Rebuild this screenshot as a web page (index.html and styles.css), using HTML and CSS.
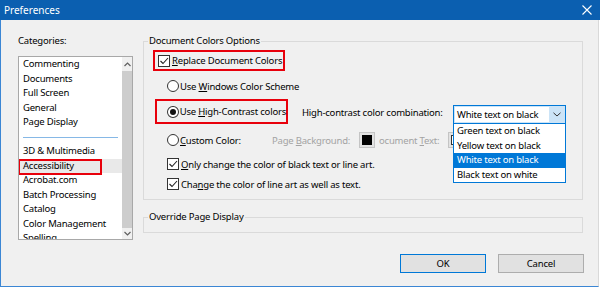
FILE: index.html
```html
<!DOCTYPE html>
<html lang="en">
  <head>
    <meta charset="UTF-8" />
    <title>Preferences</title>
    <link rel="stylesheet" href="styles.css">
  </head>
  <body>
    <div class="titlebar">
      <span class="title">Preferences</span>
      <svg class="close" width="10" height="10" viewBox="0 0 10 10">
        <path d="M0.5 0.5 L9.5 9.5 M9.5 0.5 L0.5 9.5" stroke="#fff" stroke-width="1.1" fill="none" />
      </svg>
    </div>

    <div class="window">
      <div class="main">
        <div class="categories">
          <div class="cat-label">Categories:</div>
          <div class="listbox">
            <ul class="items">
              <li>Commenting</li>
              <li>Documents</li>
              <li>Full Screen</li>
              <li>General</li>
              <li>Page Display</li>
              <li class="separator"></li>
              <li>3D &amp; Multimedia</li>
              <li class="selected">Accessibility<span class="item-mark"></span></li>
              <li>Acrobat.com</li>
              <li>Batch Processing</li>
              <li>Catalog</li>
              <li>Color Management</li>
              <li>Spelling</li>
            </ul>
            <div class="scrollbar">
              <div class="scroll-btn up">
                <svg width="7" height="5" viewBox="0 0 7 5"><path d="M0.5 4 L3.5 1 L6.5 4" stroke="#606060" stroke-width="1.2" fill="none" /></svg>
              </div>
              <div class="thumb"></div>
              <div class="scroll-btn down">
                <svg width="7" height="5" viewBox="0 0 7 5"><path d="M0.5 1 L3.5 4 L6.5 1" stroke="#606060" stroke-width="1.2" fill="none" /></svg>
              </div>
            </div>
          </div>
        </div>

        <div class="options">
          <fieldset class="group colors">
            <legend>Document Colors Options</legend>
            <div class="group-body">
              <label class="option mark row-replace">
                <span class="check"><svg width="10" height="10" viewBox="0 0 10 10"><path d="M1.5 5 L4 7.5 L9 2" stroke="#222" stroke-width="1.1" fill="none" /></svg></span>
                <span><u>R</u>eplace Document Colors</span>
              </label>

              <label class="option row-windows">
                <span class="radio"></span>
                <span>Use <u>W</u>indows Color Scheme</span>
              </label>

              <div class="row-hc">
                <label class="option mark hc-mark">
                  <span class="radio on"></span>
                  <span>Use <u>H</u>igh-Contrast colors</span>
                </label>
                <span class="hc-label">High-contrast color combination:</span>
                <div class="combo">
                  <span class="combo-text">White text on black</span>
                  <span class="combo-arrow">
                    <svg width="8" height="5" viewBox="0 0 8 5"><path d="M0.5 0.8 L4 4 L7.5 0.8" stroke="#333" stroke-width="1" fill="none" /></svg>
                  </span>
                  <ul class="combo-list">
                    <li>Green text on black</li>
                    <li>Yellow text on black</li>
                    <li class="active">White text on black</li>
                    <li>Black text on white</li>
                  </ul>
                </div>
              </div>

              <div class="option row-custom">
                <span class="radio"></span>
                <span class="custom-label"><u>C</u>ustom Color:</span>
                <span class="muted bg-label">Page <u>B</u>ackground:</span>
                <span class="swatch"><i></i></span>
                <span class="muted text-label">ocument <u>T</u>ext:</span>
                <span class="swatch light"><i></i></span>
              </div>

              <label class="option row-only">
                <span class="check"><svg width="10" height="10" viewBox="0 0 10 10"><path d="M1.5 5 L4 7.5 L9 2" stroke="#222" stroke-width="1.1" fill="none" /></svg></span>
                <span><u>O</u>nly change the color of black text or line art.</span>
              </label>

              <label class="option row-change">
                <span class="check"><svg width="10" height="10" viewBox="0 0 10 10"><path d="M1.5 5 L4 7.5 L9 2" stroke="#222" stroke-width="1.1" fill="none" /></svg></span>
                <span>Cha<u>n</u>ge the color of line art as well as text.</span>
              </label>
            </div>
          </fieldset>

          <fieldset class="group override">
            <legend>Override Page Display</legend>
          </fieldset>
        </div>
      </div>

      <div class="buttons">
        <button class="default">OK</button>
        <button>Cancel</button>
      </div>
    </div>
  </body>
</html>
```

FILE: styles.css
```css
* {
  box-sizing: border-box;
  margin: 0;
  padding: 0;
}

body {
  width: 600px;
  height: 287px;
  overflow: hidden;
  background: #fff;
  font-family: "Noto Sans", sans-serif;
  font-size: 9.5px;
  letter-spacing: -0.2px;
  color: #000;
}

u {
  text-underline-offset: 1px;
}

.titlebar {
  height: 20px;
  background: #0b5fb0;
  color: #fff;
  display: flex;
  align-items: center;
  justify-content: space-between;
  padding: 0 8px 0 4px;
}

.title {
  font-size: 10px;
  letter-spacing: 0;
}

.window {
  width: 599px;
  height: 267px;
  background: #f0f0f0;
  border-left: 1px solid #3b86d4;
  border-bottom: 1px solid #3b86d4;
  border-right: 1px solid #d9d9d9;
}

.main {
  display: flex;
  gap: 10px;
  padding: 14px 0 0 17px;
}

/* categories list */

.categories {
  width: 115px;
}

.cat-label {
  height: 14px;
  line-height: 14px;
  margin-bottom: 8px;
}

.listbox {
  height: 184px;
  border: 1px solid #a8a8a8;
  background: #fff;
  display: flex;
}

.items {
  flex: 1;
  list-style: none;
  overflow: hidden;
}

.items li {
  position: relative;
  height: 14.5px;
  line-height: 14.5px;
  padding-left: 4px;
  white-space: nowrap;
}

.items .separator::after {
  content: "";
  position: absolute;
  left: 4px;
  right: 4px;
  top: 7px;
  border-top: 1px solid #86b8e6;
}

.items .selected {
  background: #e9e9e9;
}

.item-mark {
  position: absolute;
  left: -1px;
  top: 0;
  width: 84px;
  height: 16px;
  border: 2px solid #e8000b;
}

.scrollbar {
  width: 10px;
  display: flex;
  flex-direction: column;
  background: #f0f0f0;
}

.scroll-btn {
  display: flex;
  align-items: center;
  justify-content: center;
}

.scroll-btn.up {
  height: 14px;
}

.scroll-btn.down {
  height: 11px;
}

.thumb {
  flex: 1;
  background: #cdcdcd;
}

/* option groups */

.options {
  width: 440px;
  display: flex;
  flex-direction: column;
  gap: 10px;
}

.group {
  border: 1px solid #dadada;
}

.group legend {
  line-height: 14px;
  margin-left: 4px;
  padding: 0 1px;
}

.colors {
  height: 166px;
}

.override {
  height: 23px;
}

.group-body {
  display: flex;
  flex-direction: column;
  align-items: flex-start;
}

.option {
  display: flex;
  align-items: center;
  white-space: nowrap;
}

.mark {
  border: 2px solid #e8000b;
}

.check {
  width: 12px;
  height: 12px;
  border: 1px solid #333;
  background: #fff;
  margin-right: 2px;
  display: flex;
  align-items: center;
  justify-content: center;
}

.radio {
  width: 12px;
  height: 12px;
  border: 1px solid #333;
  border-radius: 50%;
  background: #fff;
  margin-right: 1px;
  display: flex;
  align-items: center;
  justify-content: center;
}

.radio.on::after {
  content: "";
  width: 6px;
  height: 6px;
  border-radius: 50%;
  background: #111;
}

.row-replace {
  margin: 2px 0 0 9px;
  width: 132px;
  height: 21px;
  padding-left: 3px;
}

.row-windows {
  margin: 8px 0 0 23px;
  height: 14px;
}

.row-hc {
  margin: 6px 0 0 11px;
  display: flex;
  align-items: flex-end;
}

.hc-mark {
  width: 133px;
  height: 25px;
  padding-left: 10px;
}

.hc-label {
  width: 151px;
  margin-left: 14px;
  align-self: center;
  padding-top: 2px;
  white-space: nowrap;
}

.combo {
  position: relative;
  width: 113px;
  height: 19px;
  border: 1px solid #0078d7;
  background: #cce4f7;
  display: flex;
}

.combo-text {
  flex: 1;
  margin: 1px 0 1px 1px;
  background: #fff;
  padding-left: 2px;
  line-height: 15px;
  white-space: nowrap;
}

.combo-arrow {
  width: 16px;
  display: flex;
  align-items: center;
  justify-content: center;
}

.combo-list {
  position: absolute;
  left: -1px;
  top: 100%;
  width: 113px;
  height: 60px;
  list-style: none;
  background: #fff;
  border: 1px solid #0078d7;
  z-index: 2;
}

.combo-list li {
  height: 14.5px;
  line-height: 14.5px;
  padding-left: 3px;
  white-space: nowrap;
}

.combo-list .active {
  background: #0078d7;
  color: #fff;
}

.row-custom {
  margin: 8px 0 0 23px;
  height: 16px;
}

.custom-label {
  width: 92px;
}

.muted {
  color: #a3a3a3;
}

.bg-label {
  width: 87px;
}

.text-label {
  width: 69px;
  margin-left: 4px;
}

.swatch {
  width: 16px;
  height: 16px;
  border: 1px solid #c4c4c4;
  background: #e2e2e2;
  padding: 2px;
}

.swatch i {
  display: block;
  width: 100%;
  height: 100%;
  background: #000;
}

.swatch.light i {
  background: #fff;
  border: 1px solid #333;
}

.row-only {
  margin: 9px 0 0 23px;
  height: 14px;
}

.row-change {
  margin: 6px 0 0 23px;
  height: 14px;
}

/* dialog buttons */

.buttons {
  display: flex;
  justify-content: flex-end;
  gap: 12px;
  margin-top: 14px;
  padding-right: 14px;
}

.buttons button {
  width: 86px;
  height: 19px;
  font: inherit;
  letter-spacing: inherit;
  color: #000;
  background: #e1e1e1;
  border: 1px solid #adadad;
}

.buttons .default {
  border-color: #0078d7;
}
```
